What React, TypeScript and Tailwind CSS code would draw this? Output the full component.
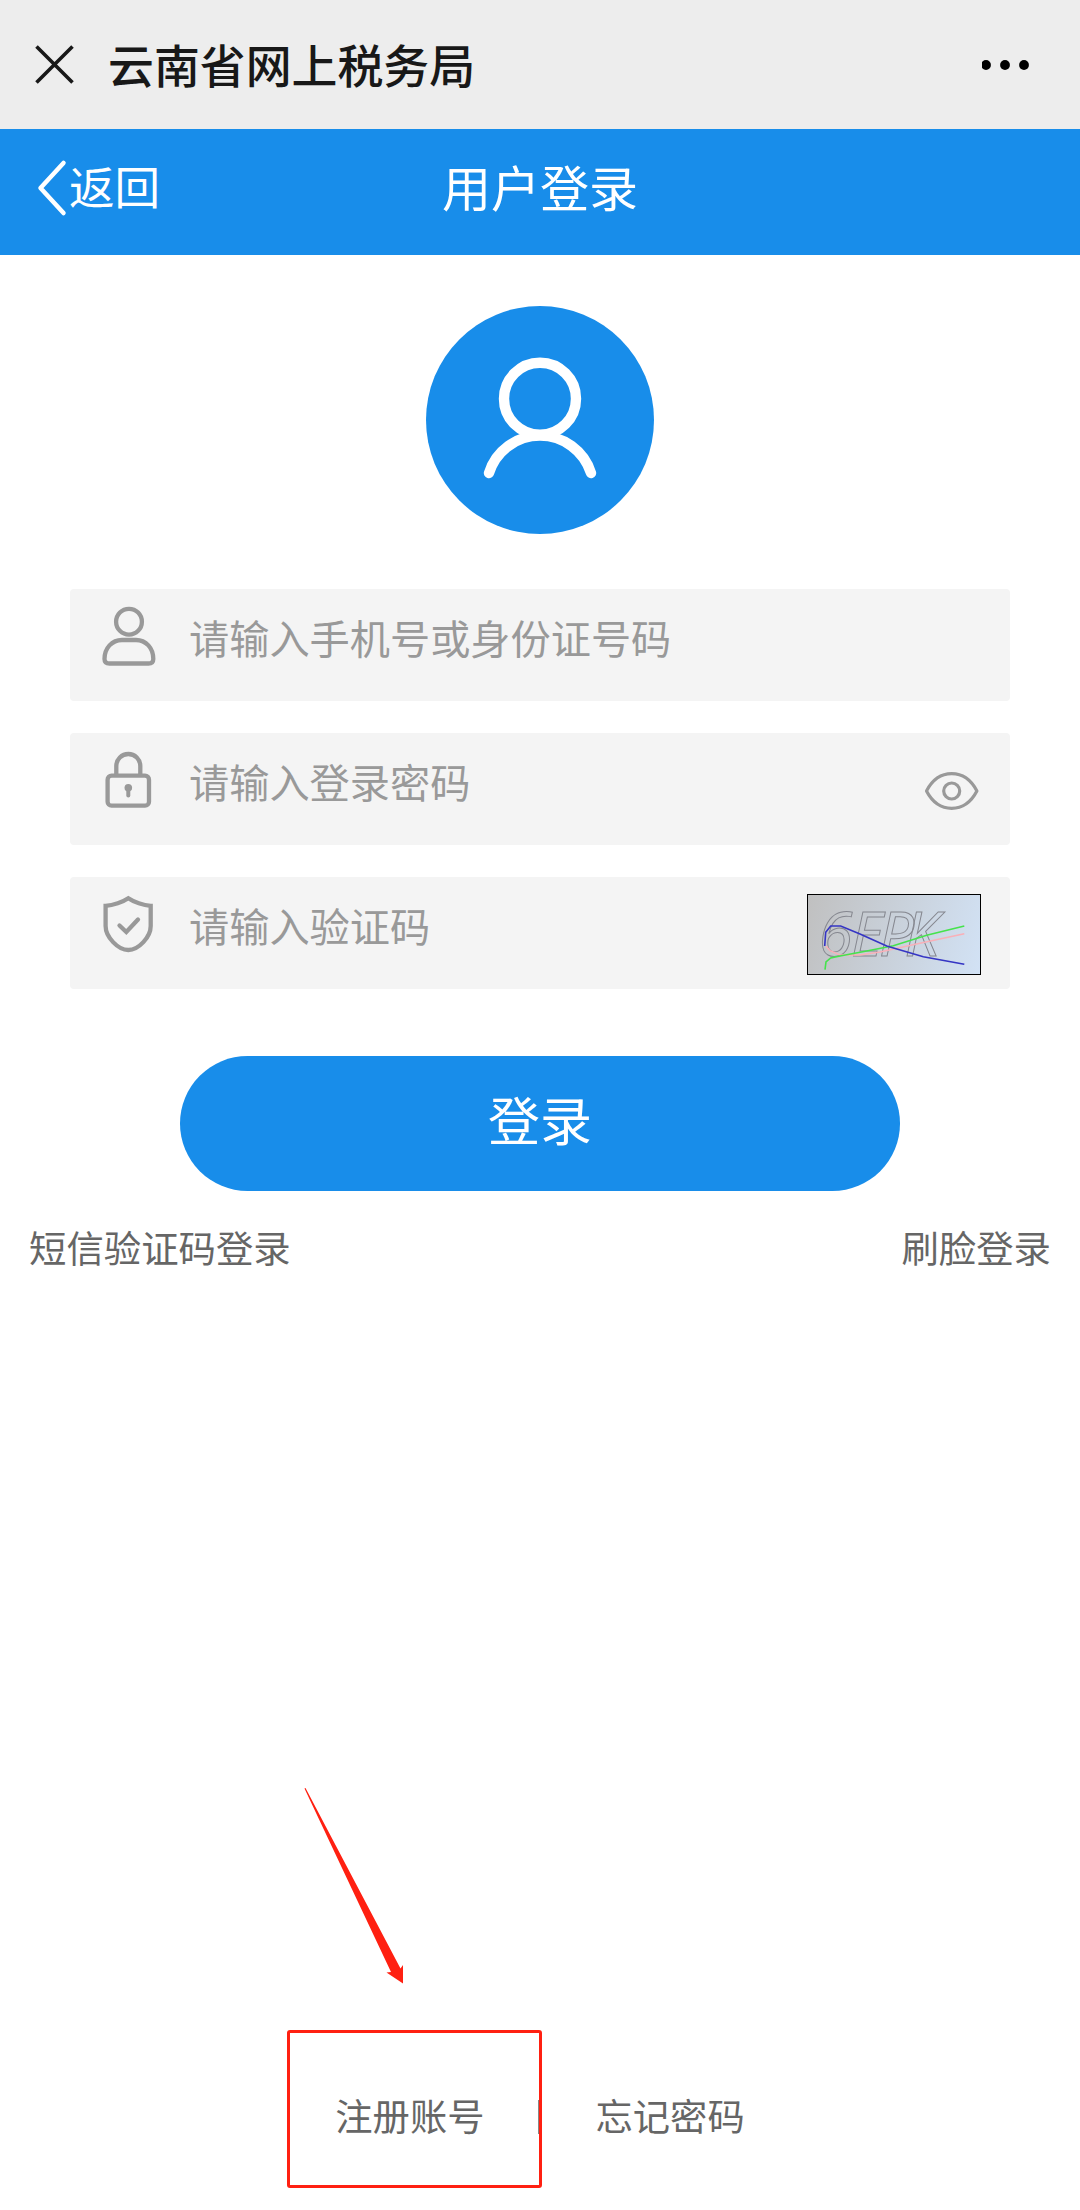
import type { ReactNode } from 'react';

const UserIcon = () => (
  <svg className="h-20 w-15" viewBox="0 0 60 80" fill="none" stroke="#999999" strokeWidth="4.300">
    <circle cx="31" cy="24.700" r="12.900" />
    <path d="M11.500 66.500Q6.500 66.500 6.500 62C6.500 51 14 43 24 43H38C48 43 55.300 51 55.300 62Q55.300 66.500 50.500 66.500Z" />
  </svg>
);

const LockIcon = () => (
  <svg className="h-20 w-15" viewBox="0 0 60 80" fill="none" stroke="#999999" strokeWidth="4.300">
    <rect x="9.600" y="34.700" width="41.400" height="30" rx="4" />
    <path d="M18.300 34V25A12 12 0 0 1 42.300 25V34" />
    <circle cx="30.300" cy="46.700" r="3.800" fill="#999999" stroke="none" />
    <path d="M30.300 47V54.500" strokeLinecap="round" strokeWidth="4" />
  </svg>
);

const ShieldIcon = () => (
  <svg className="h-20 w-15" viewBox="0 0 60 80" fill="none" stroke="#999999" strokeWidth="4.300">
    <path d="M30.300 13.300C25 17 15 20.200 7.600 20.800V41C7.600 52 20 65 30.300 65C40.600 65 52.700 52 52.700 41V20.800C45.600 20.200 35.600 17 30.300 13.300Z" />
    <path d="M21.500 40.500L28.300 47L40 34.500" strokeLinecap="round" />
  </svg>
);

const EyeIcon = () => (
  <svg className="h-10 w-14" viewBox="0 0 56 40" fill="none" stroke="#999999" strokeWidth="3.200">
    <path d="M2.500 20C8 9.500 16.500 2.700 27.700 2.700S47.400 9.500 52.900 20C47.400 30.500 38.900 37.300 27.700 37.300S8 30.500 2.500 20Z" strokeLinejoin="round" />
    <circle cx="27.700" cy="20" r="8" />
  </svg>
);

const Captcha = () => (
  <svg className="h-full w-full" viewBox="0 0 172 79" fill="none">
    <text
      x="10.500 43 71 96.500"
      y="61"
      stroke="#85878f"
      strokeWidth="1"
      className="font-['Noto_Sans'] text-[62px] italic"
    >
      6EPK
    </text>
    <path d="M18 51L22 55.700L32 60H52L72 57L105 49.700L156.300 38.700" stroke="#f9b0b8" strokeWidth="1.600" />
    <path d="M17 74.700L18 67L22.700 63L32 61L58.700 56L85.300 50.700L118.700 40.300L156.300 31" stroke="#45e34c" strokeWidth="1.600" />
    <path d="M16.700 51L17.700 37.300L22.700 31H32.700L52 39L78.700 51L115.300 61.700L156.300 69.300" stroke="#3535c4" strokeWidth="1.600" />
  </svg>
);

interface FieldProps {
  icon: ReactNode;
  placeholder: string;
  type?: string;
  children?: ReactNode;
}

function Field({ icon, placeholder, type = 'text', children }: FieldProps) {
  return (
    <div className="flex h-28 items-start rounded bg-[#f4f4f4] pl-7">
      <span className="mt-2 shrink-0">{icon}</span>
      <input
        type={type}
        placeholder={placeholder}
        className="ml-[31px] h-[94px] min-w-0 flex-1 bg-transparent text-[40.2px] outline-none placeholder:text-[#999999]"
      />
      {children}
    </div>
  );
}

export default function App() {
  return (
    <div className="relative flex h-[2210px] w-[1080px] flex-col overflow-hidden bg-white font-['Noto_Sans_CJK_SC',sans-serif]">
      <div className="flex h-[129px] shrink-0 items-center bg-[#ededed] pl-[34px] pr-[50px]">
        <svg className="size-[41px]" viewBox="0 0 41 41" stroke="#181818" strokeWidth="3.600">
          <path d="M2.500 2.500L38.500 38.500M38.500 2.500L2.500 38.500" />
        </svg>
        <h1 className="ml-[33px] pb-px text-[45.9px] leading-none font-medium text-[#181818]">云南省网上税务局</h1>
        <svg className="ml-auto h-3 w-12" viewBox="0 0 48 12" fill="#000000">
          <circle cx="4" cy="6" r="4.900" />
          <circle cx="23" cy="6" r="4.900" />
          <circle cx="42" cy="6" r="4.900" />
        </svg>
      </div>

      <header className="grid h-[126px] shrink-0 grid-cols-3 items-center bg-[#188dea] pb-2 text-white">
        <button className="flex items-center pl-9">
          <svg className="h-[60px] w-8" viewBox="0 0 32 60" fill="none" stroke="#ffffff" strokeWidth="4.500" strokeLinecap="round" strokeLinejoin="round">
            <path d="M27.500 5L4.500 30L27.500 55" />
          </svg>
          <span className="ml-px pb-1 text-[45.6px] leading-none">返回</span>
        </button>
        <h2 className="pb-1.5 text-center text-[49px] leading-none whitespace-nowrap">用户登录</h2>
      </header>

      <main className="flex flex-col">
        <div className="mx-auto mt-[51px] size-[228px] rounded-full bg-[#188dea]">
          <svg viewBox="0 0 228 228" fill="none" stroke="#ffffff" strokeWidth="10.400" strokeLinecap="round">
            <circle cx="114" cy="92.700" r="36" />
            <path d="M63 167A53.500 53.500 0 0 1 165 167" />
          </svg>
        </div>

        <form className="mx-[70px] mt-[55px] flex flex-col gap-8">
          <Field icon={<UserIcon />} placeholder="请输入手机号或身份证号码" />
          <Field icon={<LockIcon />} placeholder="请输入登录密码" type="password">
            <span className="mt-[38px] mr-[30px]">
              <EyeIcon />
            </span>
          </Field>
          <Field icon={<ShieldIcon />} placeholder="请输入验证码">
            <div className="mt-[17px] mr-[29px] h-[81px] w-[174px] border border-black bg-linear-[105deg] from-[#c0c0c0] to-[#d2e2f5]">
              <Captcha />
            </div>
          </Field>
        </form>

        <button className="mx-auto mt-[67px] h-[135px] w-[720px] rounded-full bg-[#188dea] pb-2.5 text-[52px] leading-none text-white">
          登录
        </button>

        <div className="mt-9 flex justify-between px-[29px] text-[37.4px] leading-10 text-[#666666]">
          <a>短信验证码登录</a>
          <a>刷脸登录</a>
        </div>
      </main>

      <footer className="mt-auto mb-[75px] flex h-10 items-center justify-center text-[37.3px] leading-10 text-[#666666]">
        <a>注册账号</a>
        <span className="mt-1 mr-[56px] ml-[53px] h-[34px] w-0.5 bg-[#888888]" />
        <a>忘记密码</a>
      </footer>

      {/* annotation: highlight register link */}
      <div className="absolute top-[2030px] left-[287px] h-[158px] w-[255px] rounded-[3px] border-3 border-[#ff2011]" />
      <svg className="absolute top-[1788px] left-[304px] h-[196px] w-[100px]" viewBox="0 0 100 196" fill="#ff2011">
        <path d="M0.500 0.500L1.500 0L96.500 180.500L99 177V195.500L82.500 184.500L87 184Z" />
      </svg>
    </div>
  );
}
